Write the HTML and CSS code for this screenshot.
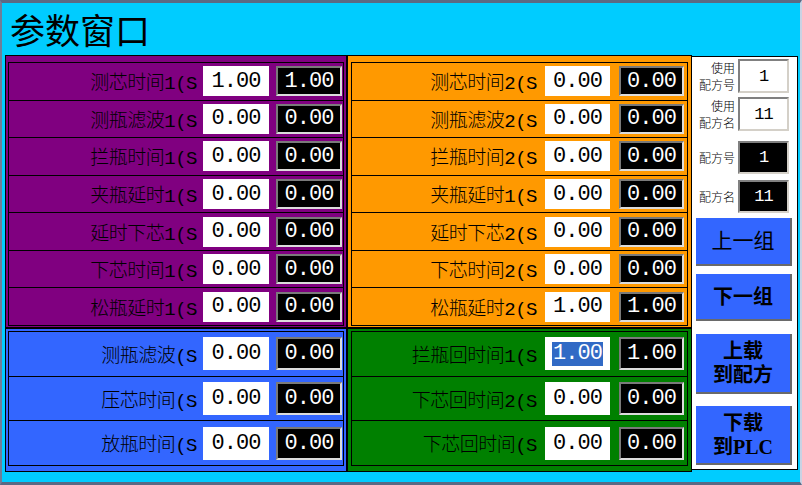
FILE: index.html
```html
<!DOCTYPE html>
<html lang="zh-CN">
<head>
    <meta charset="UTF-8">
    <title>参数窗口</title>
    <link rel="stylesheet" href="styles.css">
</head>
<body>
    <div class="window">
        <h1 class="title">参数窗口</h1>

        <div class="panel">
            <div class="groups">
                <section class="group group-top purple">
                    <div class="row"><span class="label">测芯时间1(S</span><span class="value">1.00</span><span class="readout">1.00</span></div>
                    <div class="row"><span class="label">测瓶滤波1(S</span><span class="value">0.00</span><span class="readout">0.00</span></div>
                    <div class="row"><span class="label">拦瓶时间1(S</span><span class="value">0.00</span><span class="readout">0.00</span></div>
                    <div class="row"><span class="label">夹瓶延时1(S</span><span class="value">0.00</span><span class="readout">0.00</span></div>
                    <div class="row"><span class="label">延时下芯1(S</span><span class="value">0.00</span><span class="readout">0.00</span></div>
                    <div class="row"><span class="label">下芯时间1(S</span><span class="value">0.00</span><span class="readout">0.00</span></div>
                    <div class="row"><span class="label">松瓶延时1(S</span><span class="value">0.00</span><span class="readout">0.00</span></div>
                </section>

                <section class="group group-top orange">
                    <div class="row"><span class="label">测芯时间2(S</span><span class="value">0.00</span><span class="readout">0.00</span></div>
                    <div class="row"><span class="label">测瓶滤波2(S</span><span class="value">0.00</span><span class="readout">0.00</span></div>
                    <div class="row"><span class="label">拦瓶时间2(S</span><span class="value">0.00</span><span class="readout">0.00</span></div>
                    <div class="row"><span class="label">夹瓶延时1(S</span><span class="value">0.00</span><span class="readout">0.00</span></div>
                    <div class="row"><span class="label">延时下芯2(S</span><span class="value">0.00</span><span class="readout">0.00</span></div>
                    <div class="row"><span class="label">下芯时间2(S</span><span class="value">0.00</span><span class="readout">0.00</span></div>
                    <div class="row"><span class="label">松瓶延时2(S</span><span class="value">1.00</span><span class="readout">1.00</span></div>
                </section>

                <section class="group group-bottom blue">
                    <div class="row"><span class="label">测瓶滤波(S</span><span class="value">0.00</span><span class="readout">0.00</span></div>
                    <div class="row"><span class="label">压芯时间(S</span><span class="value">0.00</span><span class="readout">0.00</span></div>
                    <div class="row"><span class="label">放瓶时间(S</span><span class="value">0.00</span><span class="readout">0.00</span></div>
                </section>

                <section class="group group-bottom green">
                    <div class="row"><span class="label">拦瓶回时间1(S</span><span class="value"><span class="selected">1.00</span></span><span class="readout">1.00</span></div>
                    <div class="row"><span class="label">下芯回时间2(S</span><span class="value">0.00</span><span class="readout">0.00</span></div>
                    <div class="row"><span class="label">下芯回时间(S</span><span class="value">0.00</span><span class="readout">0.00</span></div>
                </section>
            </div>

            <aside class="recipe">
                <div class="field field-use">
                    <span class="field-label">使用<br>配方号</span>
                    <span class="field-box">1</span>
                </div>
                <div class="field field-use field-second">
                    <span class="field-label">使用<br>配方名</span>
                    <span class="field-box">11</span>
                </div>
                <div class="field field-current field-third">
                    <span class="field-label">配方号</span>
                    <span class="field-box dark">1</span>
                </div>
                <div class="field field-current field-fourth">
                    <span class="field-label">配方名</span>
                    <span class="field-box dark">11</span>
                </div>

                <button class="btn btn-prev">上一组</button>
                <button class="btn btn-next">下一组</button>
                <button class="btn btn-tall btn-upload">上载<br>到配方</button>
                <button class="btn btn-tall btn-download">下载<br>到PLC</button>
            </aside>
        </div>
    </div>
</body>
</html>
```

FILE: styles.css
```css
:root {
    --screen: #00ccff;
    --frame: #5b6984;
    --purple: #800080;
    --orange: #ff9900;
    --blue: #3366ff;
    --green: #008000;
    --line: #000000;
}

* {
    margin: 0;
    padding: 0;
    box-sizing: border-box;
}

body {
    width: 802px;
    height: 485px;
    overflow: hidden;
    font-family: "Noto Sans CJK SC", sans-serif;
    background: var(--screen);
}

.window {
    width: 802px;
    height: 485px;
    background: var(--screen);
    border-top: 3px solid var(--frame);
    border-left: 2px solid #6f7d98;
    border-bottom: 3px solid var(--frame);
    border-right: 2px solid #c9d3e4;
}

.title {
    height: 52px;
    padding: 8px 0 0 8px;
    font-size: 35px;
    line-height: 35px;
    font-weight: normal;
    color: #000;
}

.panel {
    display: flex;
    align-items: flex-start;
    margin-left: 3px;
    width: 793px;
}

/* four coloured parameter groups */
.groups {
    display: grid;
    grid-template-columns: 342px 345px;
    grid-template-rows: 273px 144px;
}

.group {
    display: flex;
    flex-direction: column;
    border: 1px solid var(--line);
}

.group-top {
    padding: 6px 2px 1px 2px;
}

.group-bottom {
    padding: 2px 2px 5px 2px;
}

.orange,
.green {
    padding-left: 3px;
    padding-right: 3px;
}

.purple { background: var(--purple); }
.orange { background: var(--orange); }
.blue { background: var(--blue); }
.green { background: var(--green); }

.row {
    flex: 1;
    display: flex;
    align-items: center;
    justify-content: flex-end;
    gap: 7px;
    padding-right: 1px;
    border: 1px solid var(--line);
    border-top: none;
}

.row:first-child {
    border-top: 1px solid var(--line);
}

.orange .row,
.green .row {
    gap: 9px;
    padding-right: 3px;
}

.label {
    margin-right: -1px;
    font-family: "Liberation Mono", "Noto Sans CJK SC", monospace;
    font-size: 19px;
    font-weight: 300;
    letter-spacing: -0.5px;
    color: #000;
    white-space: nowrap;
}

.value,
.readout {
    display: flex;
    align-items: center;
    justify-content: center;
    width: 66px;
    height: 30px;
    font-family: "Liberation Mono", monospace;
    font-size: 22px;
    letter-spacing: -1px;
}

.orange .value,
.orange .readout,
.green .value,
.green .readout {
    width: 65px;
}

.group-bottom .value,
.group-bottom .readout {
    height: 33px;
}

.value {
    background: #fff;
    color: #000;
}

.readout {
    background: #000;
    color: #fff;
    border: 2px solid;
    border-color: #7a7a7a #dcdcdc #dcdcdc #7a7a7a;
}

.selected {
    background: #316ac5;
    color: #fff;
    line-height: 24px;
    padding: 0 1px;
}

/* recipe side panel */
.recipe {
    display: flex;
    flex-direction: column;
    width: 106px;
    height: 414px;
    margin-top: 1px;
    padding: 2px 3px 0 4px;
    background: #fff;
    border: 1px solid var(--line);
    border-left: none;
}

.field {
    display: grid;
    grid-template-columns: 1fr 51px;
    align-items: center;
    gap: 3px;
    padding-right: 5px;
}

.field-use { height: 34px; }
.field-current { height: 33px; }
.field-second { margin-top: 4px; }
.field-third { margin-top: 10px; }
.field-fourth { margin-top: 6px; }

.field-label {
    text-align: right;
    font-size: 12px;
    line-height: 17px;
    font-weight: 300;
    color: #000;
}

.field-box {
    display: flex;
    align-items: center;
    justify-content: center;
    height: 100%;
    background: #fff;
    color: #000;
    font-family: "Liberation Mono", monospace;
    font-size: 17px;
    letter-spacing: -1px;
    border: 2px solid;
    border-color: #808080 #d4d0c8 #d4d0c8 #808080;
}

.field-box.dark {
    background: #000;
    color: #fff;
}

.btn {
    display: flex;
    align-items: center;
    justify-content: center;
    width: 96px;
    height: 48px;
    background: var(--blue);
    color: #000;
    font-family: "Liberation Serif", "Noto Sans CJK SC", serif;
    font-size: 20px;
    font-weight: bold;
    line-height: 24px;
    border: none;
    border-right: 2px solid #6a6a6a;
    border-bottom: 2px solid #6a6a6a;
    cursor: pointer;
}

.btn-prev { margin-top: 5px; font-weight: normal; font-size: 21px; }
.btn-next { margin-top: 8px; height: 47px; }
.btn-upload { margin-top: 13px; height: 60px; }
.btn-download { margin-top: 12px; height: 59px; }
```
